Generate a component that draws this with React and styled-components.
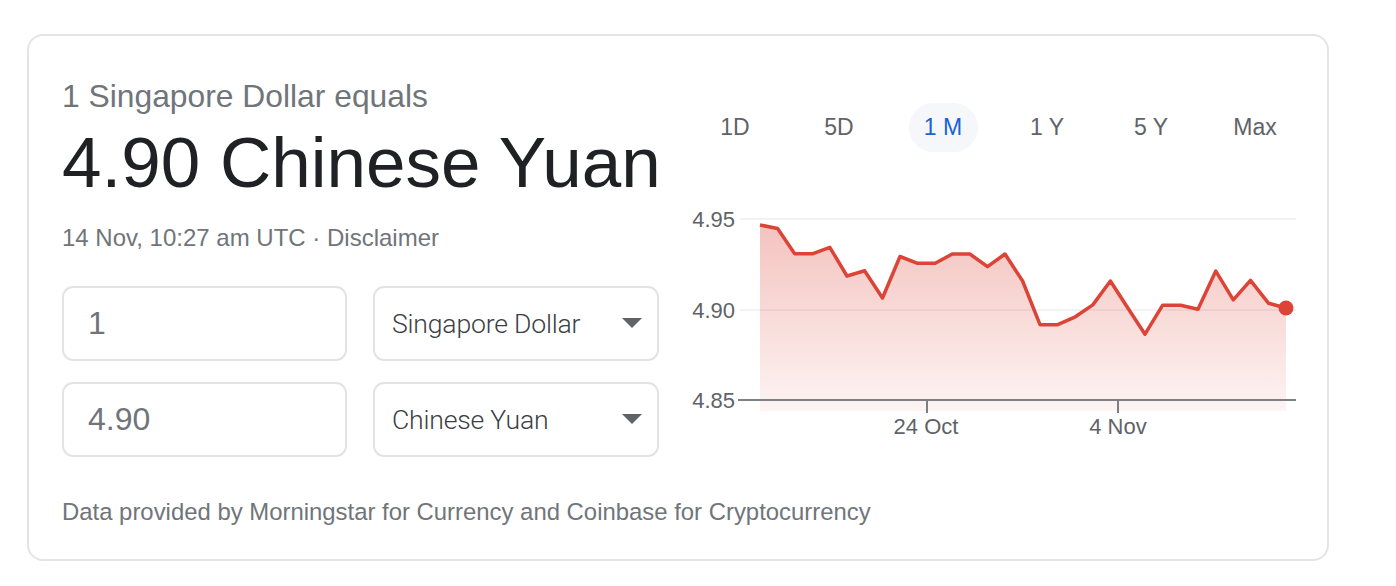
import React from "react";
import styled, { createGlobalStyle } from "styled-components";

const Global = createGlobalStyle`
  html, body { margin: 0; padding: 0; background: #ffffff; }
  body { font-family: "Liberation Sans", Arial, sans-serif; }
  * { box-sizing: border-box; }
`;

const Page = styled.div`
  padding: 34px 0 0 27px;
`;

const Card = styled.section`
  width: 1302px;
  height: 527px;
  border: 2px solid #e3e4e6;
  border-radius: 16px;
  padding: 40px 24px 0 33px;
  display: flex;
  flex-direction: column;
`;

const Top = styled.div`
  display: flex;
  gap: 23px;
`;

const Left = styled.div`
  width: 598px;
  display: flex;
  flex-direction: column;
`;

const Subtitle = styled.div`
  font-size: 31.8px;
  line-height: 40px;
  color: #70757a;
  white-space: nowrap;
`;

const Headline = styled.div`
  font-size: 71px;
  line-height: 84px;
  color: #202124;
  white-space: nowrap;
  margin-top: 5px;
`;

const Meta = styled.div`
  font-size: 24px;
  line-height: 30px;
  color: #70757a;
  white-space: nowrap;
  margin-top: 18px;
`;

const Fields = styled.div`
  display: grid;
  grid-template-columns: 285px 286px;
  grid-auto-rows: 75px;
  column-gap: 26px;
  row-gap: 21px;
  margin-top: 33px;
`;

const Field = styled.div`
  border: 2px solid #e2e3e5;
  border-radius: 11px;
  display: flex;
  align-items: center;
  padding: 0 16px 0 24px;
  color: #70757a;
  font-size: 32px;
`;

const Select = styled(Field)`
  justify-content: space-between;
  padding: 0 15px 0 17px;
  font-family: Roboto, "Liberation Sans", sans-serif;
  font-weight: 300;
  font-size: 26.6px;
  color: #3c4043;
  letter-spacing: -0.2px;
`;

const Caret = styled.span`
  width: 0;
  height: 0;
  border-left: 10px solid transparent;
  border-right: 10px solid transparent;
  border-top: 10px solid #5f6368;
  margin-top: -2px;
`;

const Right = styled.div`
  width: 620px;
  display: flex;
  flex-direction: column;
`;

const Tabs = styled.div`
  display: grid;
  grid-template-columns: repeat(6, 104px);
  margin-top: 27px;
`;

const Tab = styled.div`
  justify-self: center;
  height: 49px;
  min-width: 69px;
  padding: 0 12px;
  border-radius: 25px;
  display: flex;
  align-items: center;
  justify-content: center;
  font-size: 23px;
  color: ${(p) => (p.$active ? "#1a62d6" : "#5f6368")};
  background: ${(p) => (p.$active ? "#f5f7fa" : "transparent")};
  white-space: nowrap;
`;

const ChartSvg = styled.svg`
  display: block;
  margin-top: 43px;
  font-family: "Liberation Sans", Arial, sans-serif;
`;

const Footer = styled.div`
  margin-top: auto;
  margin-bottom: 32px;
  font-size: 23.9px;
  line-height: 30px;
  color: #70757a;
  white-space: nowrap;
`;

const OX = 683;
const OY = 195;
const pts = [
  [760, 225], [777.6, 228.5], [794.7, 253.8], [812.3, 253.8], [829.8, 247.3],
  [847, 276], [864.6, 270.8], [882.5, 298], [900, 256.5], [917.6, 263.3],
  [935.2, 263.3], [952.3, 254], [969.9, 254], [987.5, 266.7], [1005, 254],
  [1022.6, 281], [1040, 324.7], [1057.7, 324.7], [1075.3, 316.8], [1092.8, 304.9],
  [1110.4, 281], [1128, 308.3], [1145, 334.2], [1162.7, 305.2], [1180.6, 305.2],
  [1198, 309.3], [1215.8, 271.1], [1233.3, 299.8], [1250.5, 280.4], [1268.4, 303.2],
  [1286, 308],
].map(([x, y]) => [x - OX, y - OY]);

function Chart() {
  const line = pts.map((p) => p.join(",")).join(" ");
  const first = pts[0];
  const last = pts[pts.length - 1];
  const bottom = 411 - OY;
  const area = `${line} ${last[0]},${bottom} ${first[0]},${bottom}`;
  const gy = (v) => v - OY;
  const gx = (v) => v - OX;
  return (
    <ChartSvg width="620" height="250" viewBox="0 0 620 250">
      <defs>
        <linearGradient id="fillGrad" x1="0" y1="0" x2="0" y2="1">
          <stop offset="0" stopColor="#db4437" stopOpacity="0.32" />
          <stop offset="1" stopColor="#db4437" stopOpacity="0.06" />
        </linearGradient>
      </defs>
      <line x1={gx(740)} x2={gx(1296)} y1={gy(219)} y2={gy(219)} stroke="#f1f2f3" strokeWidth="2" />
      <line x1={gx(740)} x2={gx(1296)} y1={gy(310)} y2={gy(310)} stroke="#f1f2f3" strokeWidth="2" />
      <polygon points={area} fill="url(#fillGrad)" />
      <line x1={gx(738)} x2={gx(1296)} y1={gy(400)} y2={gy(400)} stroke="#7c7f84" strokeWidth="2" />
      <line x1={gx(927)} x2={gx(927)} y1={gy(400)} y2={gy(413)} stroke="#7c7f84" strokeWidth="2" />
      <line x1={gx(1118)} x2={gx(1118)} y1={gy(400)} y2={gy(413)} stroke="#7c7f84" strokeWidth="2" />
      <polyline points={line} fill="none" stroke="#db4437" strokeWidth="3.5" strokeLinejoin="round" />
      <circle cx={last[0]} cy={last[1]} r="7.5" fill="#db4437" />
      <g fontSize="22" fill="#5f6368" textAnchor="end">
        <text x={gx(735)} y={gy(227)}>4.95</text>
        <text x={gx(735)} y={gy(318)}>4.90</text>
        <text x={gx(735)} y={gy(408)}>4.85</text>
      </g>
      <g fontSize="22" fill="#5f6368" textAnchor="middle">
        <text x={gx(926)} y={gy(434)}>24 Oct</text>
        <text x={gx(1118)} y={gy(434)}>4 Nov</text>
      </g>
    </ChartSvg>
  );
}

const ranges = ["1D", "5D", "1 M", "1 Y", "5 Y", "Max"];

export default function App() {
  return (
    <Page>
      <Global />
      <Card>
        <Top>
          <Left>
            <Subtitle>1 Singapore Dollar equals</Subtitle>
            <Headline>4.90 Chinese Yuan</Headline>
            <Meta>14 Nov, 10:27 am UTC · Disclaimer</Meta>
            <Fields>
              <Field>1</Field>
              <Select>
                Singapore Dollar
                <Caret />
              </Select>
              <Field>4.90</Field>
              <Select>
                Chinese Yuan
                <Caret />
              </Select>
            </Fields>
          </Left>
          <Right>
            <Tabs>
              {ranges.map((r) => (
                <Tab key={r} $active={r === "1 M"}>
                  {r}
                </Tab>
              ))}
            </Tabs>
            <Chart />
          </Right>
        </Top>
        <Footer>Data provided by Morningstar for Currency and Coinbase for Cryptocurrency</Footer>
      </Card>
    </Page>
  );
}
